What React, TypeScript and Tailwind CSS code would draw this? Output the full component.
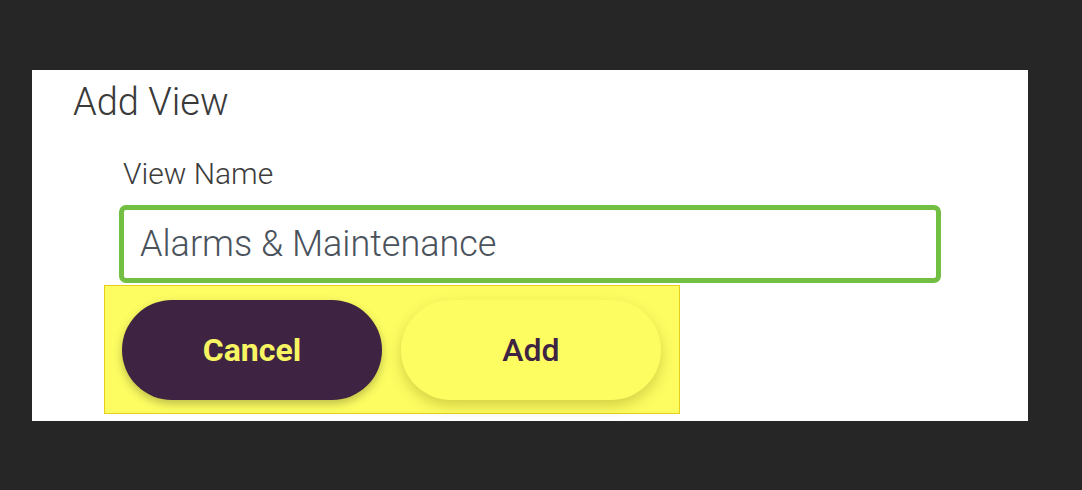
import React from 'react';

const App: React.FC = () => {
  return (
    <div className="h-[490px] w-full bg-[#262626] pt-[70px] pl-[32px]" style={{ fontFamily: 'Roboto, "Open Sans", sans-serif' }}>
      <div className="w-[996px] h-[351px] bg-white">
        {/* Title */}
        <h2 className="pl-[41px] pt-[10px] text-[38px] leading-[44px] font-light text-[#3a3a3a]">Add View</h2>

        <div className="pl-[87px] pt-[32px]">
          <label className="block pl-[4px] text-[30px] leading-[36px] font-light text-[#3c3c3c]">View Name</label>
          <div className="mt-[13px] w-[822px] h-[78px] rounded-[7px] border-[5px] border-[#72bf44] flex items-center pl-[16px]">
            <span className="text-[36px] font-light text-[#4a525c]">Alarms &amp; Maintenance</span>
          </div>

          {/* Buttons */}
          <div className="-ml-[15px] mt-[2px] w-[576px] h-[129px] bg-[#fdfd62] border border-[#e8cf1a] flex items-center gap-[19px] pl-[17px]">
            <button className="w-[260px] h-[100px] rounded-full bg-[#3e2442] text-[#f7f562] text-[32px] font-bold shadow-[0_4px_10px_rgba(0,0,0,0.25)]">
              Cancel
            </button>
            <button className="w-[260px] h-[100px] rounded-full bg-[#fdfd62] text-[#3e2442] text-[32px] font-medium shadow-[0_6px_14px_rgba(120,110,0,0.3)]">
              Add
            </button>
          </div>
        </div>
      </div>
    </div>
  );
};

export default App;
